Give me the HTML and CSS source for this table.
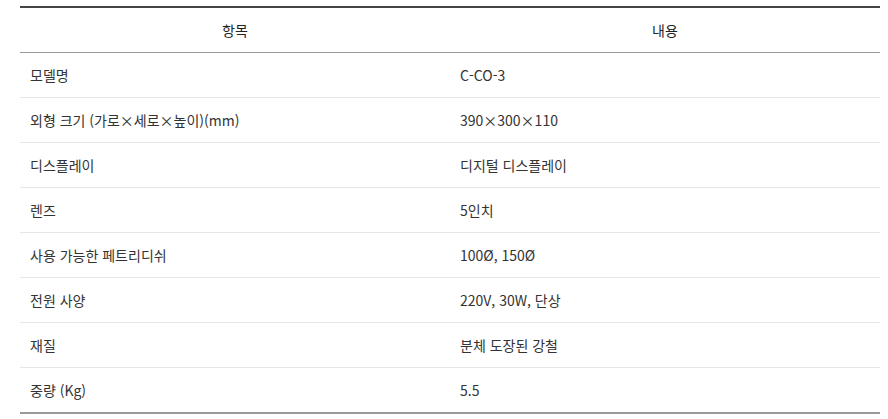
FILE: index.html
```html
<!DOCTYPE html>
<html lang="ko">
<head>
<meta charset="utf-8">
<link rel="stylesheet" href="styles.css">
</head>
<body>
<div class="wrap">
<table class="spec">
<thead>
<tr><th>항목</th><th>내용</th></tr>
</thead>
<tbody>
<tr><td>모델명</td><td>C-CO-3</td></tr>
<tr><td>외형 크기 (가로×세로×높이)(mm)</td><td>390×300×110</td></tr>
<tr><td>디스플레이</td><td>디지털 디스플레이</td></tr>
<tr><td>렌즈</td><td>5인치</td></tr>
<tr><td>사용 가능한 페트리디쉬</td><td>100Ø, 150Ø</td></tr>
<tr><td>전원 사양</td><td>220V, 30W, 단상</td></tr>
<tr><td>재질</td><td>분체 도장된 강철</td></tr>
<tr><td>중량 (Kg)</td><td>5.5</td></tr>
</tbody>
</table>
</div>
</body>
</html>
```
FILE: styles.css
```css
html, body { margin: 0; padding: 0; background: #fff; }
body { font-family: "Noto Sans CJK KR", "Noto Sans", sans-serif; color: #333; }
.wrap { padding: 6px 8px 0 20px; }
.spec { width: 860px; border-collapse: collapse; table-layout: fixed; border-top: 2px solid #444; border-bottom: 2px solid #999; }
.spec th { height: 44px; font-size: 14px; font-weight: 400; color: #222; text-align: center; border-bottom: 1px solid #999; padding: 0; }
.spec td { height: 44px; font-size: 14px; padding: 0 10px; border-bottom: 1px solid #e6e6e6; text-align: left; }
.spec tbody tr:last-child td { border-bottom: none; }
```
